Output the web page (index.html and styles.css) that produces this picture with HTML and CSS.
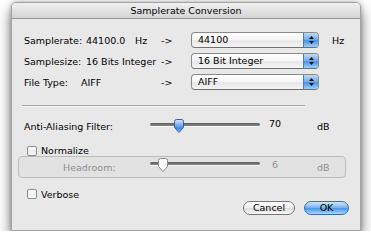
FILE: index.html
```html
<!DOCTYPE html>
<html>

<head>
    <title>Samplerate Conversion</title>
    <link rel="stylesheet" href="styles.css">
</head>

<body>
    <div class="window">
        <div class="titlebar">Samplerate Conversion</div>
        <div class="content">
            <div class="format-grid">
                <span>Samplerate:</span>
                <span>44100.0</span>
                <span>Hz</span>
                <span class="arrow">-&gt;</span>
                <div class="popup">
                    <span class="popup-text">44100</span>
                    <span class="popup-arrows">
                        <svg width="7" height="10" viewBox="0 0 7 10"><path d="M1 4 L3.5 1 L6 4 Z M1 6 L3.5 9 L6 6 Z" fill="#111"/></svg>
                    </span>
                </div>
                <span class="unit">Hz</span>

                <span>Samplesize:</span>
                <span class="wide">16 Bits Integer</span>
                <span class="arrow">-&gt;</span>
                <div class="popup">
                    <span class="popup-text">16 Bit Integer</span>
                    <span class="popup-arrows">
                        <svg width="7" height="10" viewBox="0 0 7 10"><path d="M1 4 L3.5 1 L6 4 Z M1 6 L3.5 9 L6 6 Z" fill="#111"/></svg>
                    </span>
                </div>
                <span></span>

                <span>File Type:</span>
                <span class="wide shift">AIFF</span>
                <span class="arrow">-&gt;</span>
                <div class="popup">
                    <span class="popup-text">AIFF</span>
                    <span class="popup-arrows">
                        <svg width="7" height="10" viewBox="0 0 7 10"><path d="M1 4 L3.5 1 L6 4 Z M1 6 L3.5 9 L6 6 Z" fill="#111"/></svg>
                    </span>
                </div>
                <span></span>
            </div>

            <div class="separator"></div>

            <div class="slider-row">
                <span>Anti-Aliasing Filter:</span>
                <div class="slider">
                    <div class="track"></div>
                    <svg class="thumb" style="left: 23px" width="12" height="14" viewBox="0 0 12 14">
                        <defs>
                            <linearGradient id="blue" x1="0" y1="0" x2="0" y2="1">
                                <stop offset="0" stop-color="#dcebfb"/>
                                <stop offset="0.45" stop-color="#74aceb"/>
                                <stop offset="0.7" stop-color="#3f89e0"/>
                                <stop offset="1" stop-color="#9ccbf6"/>
                            </linearGradient>
                        </defs>
                        <path d="M1.5 2.5 Q1.5 0.5 3.5 0.5 H8.5 Q10.5 0.5 10.5 2.5 V8.5 L6 13.5 L1.5 8.5 Z" fill="url(#blue)" stroke="#3b5f92"/>
                    </svg>
                </div>
                <span class="value">70</span>
                <span class="db">dB</span>
            </div>

            <div class="group">
                <div class="group-title">
                    <span class="checkbox"></span>
                    <span>Normalize</span>
                </div>
                <div class="group-row">
                    <span class="dim-label">Headroom:</span>
                    <div class="slider top">
                        <div class="track"></div>
                        <svg class="thumb" style="left: 7px" width="12" height="14" viewBox="0 0 12 14">
                            <path d="M1.5 2.5 Q1.5 0.5 3.5 0.5 H8.5 Q10.5 0.5 10.5 2.5 V8.5 L6 13.5 L1.5 8.5 Z" fill="#fafafa" stroke="#8a8a8a"/>
                        </svg>
                    </div>
                    <span class="value dim">6</span>
                    <span class="db dim">dB</span>
                </div>
            </div>

            <div class="check-row">
                <span class="checkbox"></span>
                <span>Verbose</span>
            </div>

            <div class="buttons">
                <button class="button cancel">Cancel</button>
                <button class="button ok">OK</button>
            </div>
        </div>
    </div>
</body>

</html>
```

FILE: styles.css
```css
* {
    box-sizing: border-box;
}

body {
    margin: 0;
    background-color: #fff;
    font-family: "DejaVu Sans", "Liberation Sans", sans-serif;
    font-size: 9.5px;
    color: #000;
}

.window {
    width: 350px;
    height: 229px;
    margin: 2px 0 0 11px;
    display: flex;
    flex-direction: column;
    background-color: #e8e8e8;
    border: 1px solid #a4a4a4;
    border-radius: 5px 5px 0 0;
    box-shadow: 0 7px 14px rgba(0, 0, 0, 0.55), 0 0 4px rgba(0, 0, 0, 0.25);
}

.titlebar {
    height: 16px;
    line-height: 15px;
    text-align: center;
    border-bottom: 1px solid #999;
    border-radius: 4px 4px 0 0;
    background: linear-gradient(#f0f0f0, #d4d4d4);
}

.content {
    flex: 1;
    display: flex;
    flex-direction: column;
    padding: 13px 14px 0 12px;
}

.format-grid {
    display: grid;
    grid-template-columns: 62px 49px 26px 30px 128px auto;
    grid-auto-rows: 16px;
    row-gap: 5px;
    align-items: center;
}

.wide {
    grid-column: span 2;
}

.shift {
    margin-left: -5px;
}

.unit {
    padding-left: 13px;
}

.popup {
    display: flex;
    height: 16px;
    border: 1px solid #8a8a8a;
    border-bottom-color: #707070;
    border-radius: 4px;
    overflow: hidden;
    background: linear-gradient(#ffffff, #f4f4f4 50%, #e6e6e6 55%, #f6f6f6);
}

.popup-text {
    flex: 1;
    padding-left: 6px;
    line-height: 14px;
}

.popup-arrows {
    width: 15px;
    display: flex;
    align-items: center;
    justify-content: center;
    border-left: 1px solid #4f7cbd;
    background: linear-gradient(#bcd9f8, #78b0ee 45%, #4a94e6 55%, #9fcff8);
}

.separator {
    width: 283px;
    height: 1px;
    margin: 15px 0 0 -2px;
    background-color: #a6a6a6;
    box-shadow: 0 1px 0 #f6f6f6;
}

.slider-row {
    display: grid;
    grid-template-columns: 126px 110px 30px auto;
    height: 16px;
    margin-top: 12px;
    align-items: center;
}

.slider {
    position: relative;
    height: 16px;
}

.slider.top {
    align-self: start;
}

.track {
    margin-top: 5px;
    height: 3px;
    border-radius: 2px;
    background: linear-gradient(#5c5c5c, #8a8a8a);
    box-shadow: 0 1px 0 #f4f4f4;
}

.thumb {
    position: absolute;
    top: 1px;
}

.value {
    text-align: center;
    margin-bottom: 5px;
}

.db {
    padding-left: 27px;
}

.dim,
.dim-label {
    color: #8f8f8f;
}

.group {
    position: relative;
    height: 22px;
    margin: 22px 0 0 -6px;
    border: 1px solid #bcbcbc;
    border-radius: 4px;
    background-color: #e2e2e2;
}

.group-title {
    position: absolute;
    top: -12px;
    left: 7px;
    height: 11px;
    display: flex;
    align-items: center;
    gap: 4px;
    padding: 0 2px 0 1px;
    background-color: #e8e8e8;
}

.group-row {
    display: grid;
    grid-template-columns: 131px 110px 30px auto;
    height: 20px;
    align-items: center;
}

.dim-label {
    padding-left: 44px;
}

.checkbox {
    width: 10px;
    height: 10px;
    border: 1px solid #8c8c8c;
    border-radius: 2px;
    background: linear-gradient(#ffffff, #ececec 50%, #f8f8f8);
}

.check-row {
    display: flex;
    align-items: center;
    gap: 4px;
    height: 12px;
    margin: 10px 0 0 3px;
}

.buttons {
    display: flex;
    justify-content: flex-end;
    gap: 9px;
    height: 14px;
    margin: 1px -3px 0 0;
}

.button {
    height: 14px;
    padding: 0;
    border-radius: 7px;
    font-family: inherit;
    font-size: 9.5px;
    line-height: 12px;
    color: #000;
}

.cancel {
    width: 52px;
    border: 1px solid #777;
    background: linear-gradient(#ffffff, #f2f2f2 45%, #dedede 55%, #f8f8f8);
}

.ok {
    width: 45px;
    border: 1px solid #3c6db3;
    background: linear-gradient(#cfe5fb, #7db6f0 45%, #4b96ea 55%, #a9d7fb);
}
```
